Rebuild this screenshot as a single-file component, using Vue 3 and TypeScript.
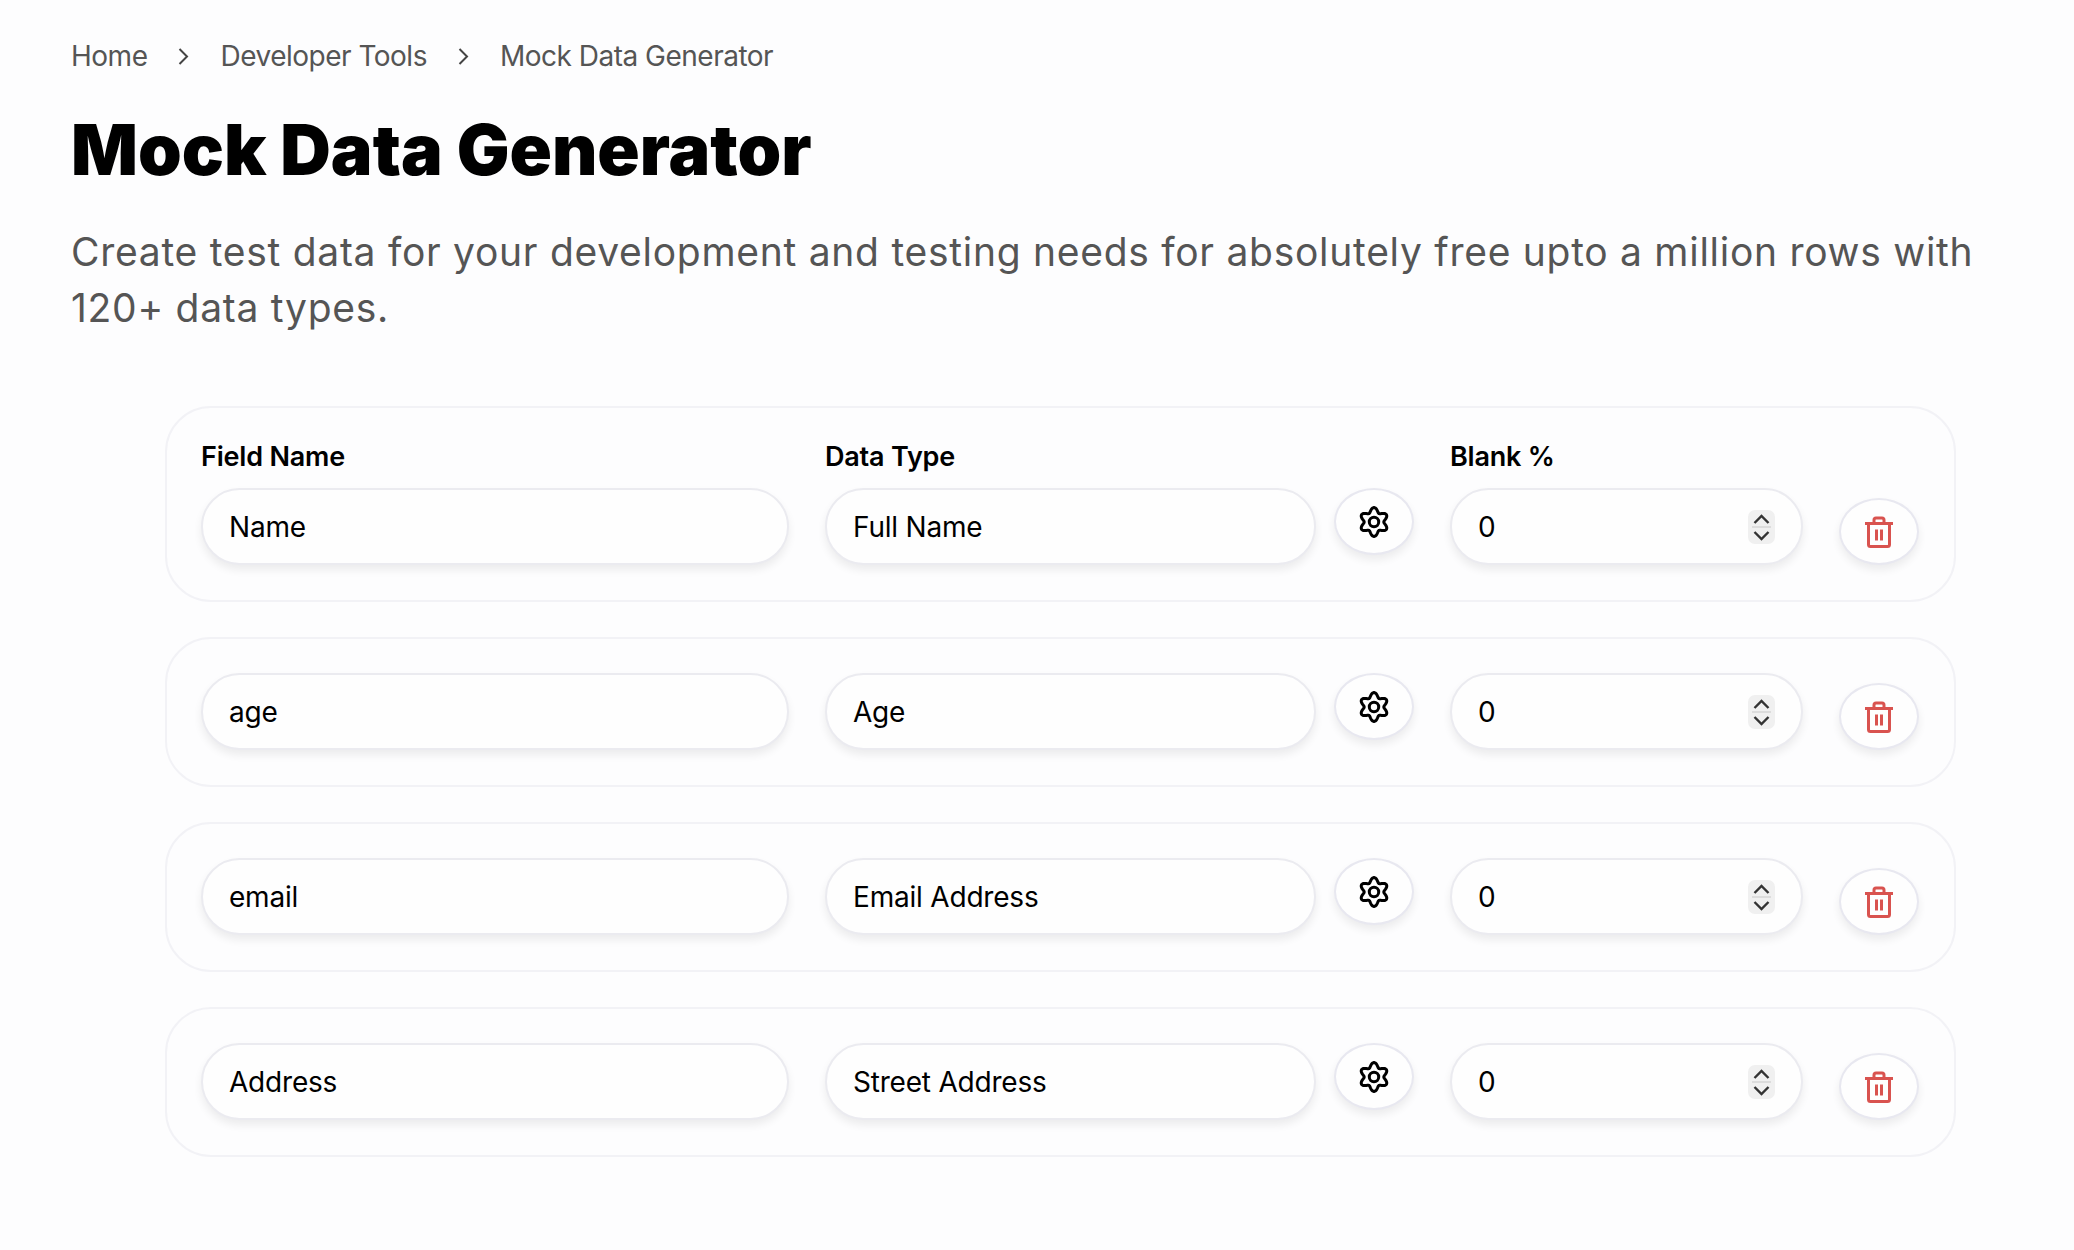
<script setup lang="ts">
interface Row {
  name: string;
  type: string;
  blank: number;
}

const rows: Row[] = [
  { name: "Name", type: "Full Name", blank: 0 },
  { name: "age", type: "Age", blank: 0 },
  { name: "email", type: "Email Address", blank: 0 },
  { name: "Address", type: "Street Address", blank: 0 },
];

// six-lobed cog outline, sampled in polar form
const cogPath = (() => {
  const pts: string[] = [];
  for (let i = 0; i < 120; i++) {
    const t = (i / 120) * Math.PI * 2;
    const r = 12.1 + 2.3 * Math.cos(6 * t);
    const a = t - Math.PI / 2;
    pts.push(`${(16 + r * Math.cos(a)).toFixed(2)} ${(16 + r * Math.sin(a)).toFixed(2)}`);
  }
  return "M" + pts.join("L") + "Z";
})();
</script>

<template>
  <div class="page">
    <nav class="crumbs">
      <span>Home</span>
      <svg class="chev" viewBox="0 0 11 17" width="11" height="17"><path d="M1.5 1 9 8.500 1.500 16" /></svg>
      <span>Developer Tools</span>
      <svg class="chev" viewBox="0 0 11 17" width="11" height="17"><path d="M1.5 1 9 8.500 1.500 16" /></svg>
      <span>Mock Data Generator</span>
    </nav>
    <h1 class="title">Mock Data Generator</h1>
    <p class="lead">Create test data for your development and testing needs for absolutely free upto a million rows with 120+ data types.</p>

    <div class="rows">
      <section v-for="(row, i) in rows" :key="i" class="card">
        <div class="col col-name">
          <label v-if="i === 0" class="label">Field Name</label>
          <input class="pill" type="text" :value="row.name" />
        </div>
        <div class="col col-type">
          <label v-if="i === 0" class="label">Data Type</label>
          <div class="type-line">
            <input class="pill" type="text" :value="row.type" />
            <button class="round gear" type="button" aria-label="Settings">
              <svg viewBox="0 0 32 32" width="32" height="32" fill="none" stroke="#000" stroke-width="3">
                <path :d="cogPath" stroke-linejoin="round" />
                <circle cx="16" cy="16" r="4.700" />
              </svg>
            </button>
          </div>
        </div>
        <div class="col col-blank">
          <label v-if="i === 0" class="label">Blank %</label>
          <div class="pill number">
            <span>{{ row.blank }}</span>
            <span class="spin">
              <svg viewBox="0 0 27 34" width="27" height="34" fill="none">
                <path d="M6.500 13 13.500 6l7 7M6.500 22l7 7 7-7" stroke="#333" stroke-width="2.400" />
                <path d="M4 17h19" stroke="#dcdcdc" stroke-width="2" />
              </svg>
            </span>
          </div>
        </div>
        <button class="round trash" type="button" aria-label="Delete">
          <svg viewBox="0 0 28 32" width="28" height="32" fill="none" stroke="#d9534f" stroke-width="3">
            <path d="M0 7.500h28M3.500 7.500v21a2 2 0 0 0 2 2h17a2 2 0 0 0 2-2v-21M9 7.500V4a2 2 0 0 1 2-2h6a2 2 0 0 1 2 2v3.500M11.500 13.500v11M16.500 13.500v11" />
          </svg>
        </button>
      </section>
    </div>
  </div>
</template>

<style scoped>
.page { box-sizing:border-box; min-height:1250px; padding:36px 71px 0; background:#fdfdfe; color:#000; font-family:Inter, "Liberation Sans", sans-serif; }
.crumbs { display:flex; align-items:center; gap:31px; height:40px; color:#555; font-size:28px; letter-spacing:-0.5px; }
.chev { fill:none; stroke:#444; stroke-width:2; }
.title { margin:32px 0 0; font-size:70px; line-height:84px; font-weight:900; letter-spacing:0; color:#000; }
.lead { margin:32px 0 0; font-size:39px; line-height:56px; letter-spacing:0.72px; color:#555; }
.rows { display:flex; flex-direction:column; gap:35px; margin:70px 47px 0 94px; }
.card { box-sizing:border-box; display:flex; align-items:flex-end; gap:36px; padding:34px 35px 35px 34px; border:2px solid #f2f2f6; border-radius:46px; }
.col { display:flex; flex-direction:column; flex:none; }
.col-name { width:588px; }
.col-type { width:589px; }
.col-blank { width:353px; }
.label { margin-bottom:17px; font-size:27px; line-height:29px; font-weight:600; letter-spacing:-0.2px; }
.type-line { display:flex; align-items:flex-start; gap:18px; }
.pill { box-sizing:border-box; width:100%; min-width:0; height:77px; padding:0 26px; border:2px solid #ebebf0; border-radius:39px; background:#fefefe; box-shadow:0 5px 8px rgba(0,0,0,.07); font:400 28px Inter, "Liberation Sans", sans-serif; letter-spacing:-0.2px; color:#000; outline:none; }
.number { display:flex; align-items:center; justify-content:space-between; }
.spin { display:flex; width:27px; height:34px; border-radius:7px; background:#f0f0f0; }
.round { flex:none; display:flex; align-items:center; justify-content:center; box-sizing:border-box; width:80px; height:67px; padding:0; border:2px solid #e8e8f0; border-radius:50%; background:#fefefe; box-shadow:0 5px 8px rgba(0,0,0,.07); }
</style>

<style>
html, body { background:#fdfdfe; }
</style>
